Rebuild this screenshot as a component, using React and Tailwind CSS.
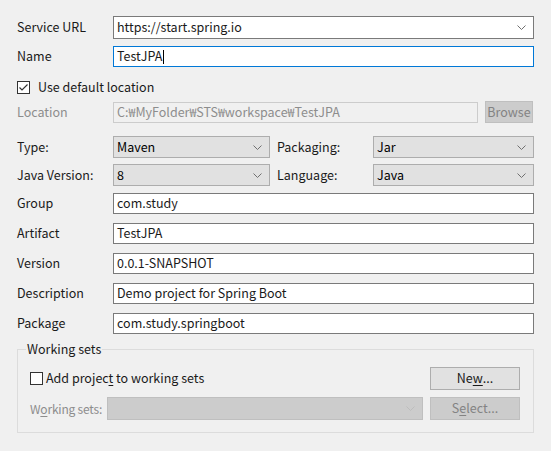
import React from "react";

/* small down chevron used in combo boxes */
function Chevron({ disabled }) {
  return (
    <svg width="9" height="5" viewBox="0 0 9 5" className="shrink-0">
      <path
        d="M0.5 0.5 L4.5 4.5 L8.5 0.5"
        fill="none"
        stroke={disabled ? "#bdbdbd" : "#707070"}
        strokeWidth="1"
      />
    </svg>
  );
}

function Combo({ value, className = "", disabled = false }) {
  const skin = disabled
    ? "bg-[#cccccc] border-[#bfbfbf]"
    : "bg-[#e1e1e1] border-[#adadad]";
  return (
    <div
      className={`flex items-center justify-between border pl-[3px] pr-[7px] ${skin} ${className}`}
    >
      <span className="text-[#000]">{value}</span>
      <Chevron disabled={disabled} />
    </div>
  );
}

function TextField({ value, className = "" }) {
  return (
    <div
      className={`flex items-center border border-[#7a7a7a] bg-white pl-[3px] ${className}`}
    >
      {value}
    </div>
  );
}

function Checkbox({ checked }) {
  return (
    <div className="w-[13px] h-[13px] border border-[#333] bg-white flex items-center justify-center shrink-0">
      {checked && (
        <svg width="11" height="11" viewBox="0 0 11 11">
          <path d="M1.5 5.5 L4 8 L9.5 2.5" fill="none" stroke="#333" strokeWidth="1.2" />
        </svg>
      )}
    </div>
  );
}

function FieldRow({ label, value, mt }) {
  return (
    <div className={`flex items-center ${mt}`}>
      <span className="w-[96px] shrink-0">{label}</span>
      <TextField value={value} className="flex-1 h-[21px]" />
    </div>
  );
}

export default function App() {
  return (
    <div
      className="w-[551px] h-[451px] bg-[#f0f0f0] text-[12.5px] text-[#1a1a1a] px-[17px] pt-[16px] leading-none whitespace-nowrap"
      style={{ fontFamily: '"Noto Sans CJK KR", "Noto Sans", sans-serif' }}
    >
      {/* Service URL */}
      <div className="flex items-center">
        <span className="w-[96px] shrink-0">Service URL</span>
        <div className="flex-1 h-[23px] flex items-center justify-between border border-[#7a7a7a] bg-white pl-[3px] pr-[7px]">
          <span>https://start.spring.io</span>
          <Chevron />
        </div>
      </div>

      {/* Name */}
      <div className="flex items-center mt-[7px]">
        <span className="w-[96px] shrink-0">Name</span>
        <div className="flex-1 h-[21px] flex items-center border border-[#0078d7] bg-white pl-[3px]">
          TestJPA
          <span className="inline-block w-px h-[14px] bg-black ml-px" />
        </div>
      </div>

      {/* Use default location */}
      <div className="flex items-center mt-[13px] h-[14px]">
        <Checkbox checked />
        <span className="ml-[8px]">Use default location</span>
      </div>

      {/* Location */}
      <div className="flex items-center mt-[7px]">
        <span className="w-[96px] shrink-0 text-[#8d8d8d]">Location</span>
        <div className="w-[365px] h-[21px] flex items-center border border-[#cccccc] bg-[#f0f0f0] pl-[3px] text-[#8d8d8d]">
          C:₩MyFolder₩STS₩workspace₩TestJPA
        </div>
        <div className="ml-[7px] w-[48px] h-[22px] flex items-center justify-center bg-[#cccccc] border border-[#bfbfbf] text-[#838383]">
          Browse
        </div>
      </div>

      {/* Type / Packaging */}
      <div className="flex items-center mt-[13px]">
        <span className="w-[96px] shrink-0">Type:</span>
        <Combo value="Maven" className="w-[157px] h-[22px]" />
        <span className="ml-[7px] w-[96px] shrink-0">Packaging:</span>
        <Combo value="Jar" className="flex-1 h-[22px]" />
      </div>

      {/* Java Version / Language */}
      <div className="flex items-center mt-[6px]">
        <span className="w-[96px] shrink-0">Java Version:</span>
        <Combo value="8" className="w-[157px] h-[22px]" />
        <span className="ml-[7px] w-[96px] shrink-0">Language:</span>
        <Combo value="Java" className="flex-1 h-[22px]" />
      </div>

      <FieldRow label="Group" value="com.study" mt="mt-[7px]" />
      <FieldRow label="Artifact" value="TestJPA" mt="mt-[9px]" />
      <FieldRow label="Version" value="0.0.1-SNAPSHOT" mt="mt-[9px]" />
      <FieldRow label="Description" value="Demo project for Spring Boot" mt="mt-[9px]" />
      <FieldRow label="Package" value="com.study.springboot" mt="mt-[9px]" />

      {/* Working sets group */}
      <div className="relative mt-[15px] h-[84px] border border-[#dcdcdc] pl-[12px] pr-[13px] pt-[17px]">
        <span className="absolute -top-[7px] left-[8px] bg-[#f0f0f0] px-px">Working sets</span>

        <div className="flex items-center justify-between">
          <div className="flex items-center">
            <Checkbox />
            <span className="ml-[3px]">
              Add projec<u className="underline underline-offset-2">t</u> to working sets
            </span>
          </div>
          <div className="w-[90px] h-[23px] flex items-center justify-center bg-[#e1e1e1] border border-[#adadad]">
            Ne<u className="underline underline-offset-2">w</u>...
          </div>
        </div>

        <div className="flex items-center mt-[7px]">
          <span className="w-[77px] shrink-0 text-[12px] tracking-[-0.2px] text-[#8d8d8d]">
            W<u className="underline underline-offset-2">o</u>rking sets:
          </span>
          <Combo value="" disabled className="w-[316px] h-[23px]" />
          <div className="ml-auto w-[90px] h-[23px] flex items-center justify-center bg-[#cccccc] border border-[#bfbfbf] text-[#838383]">
            S<u className="underline underline-offset-2">e</u>lect...
          </div>
        </div>
      </div>
    </div>
  );
}
